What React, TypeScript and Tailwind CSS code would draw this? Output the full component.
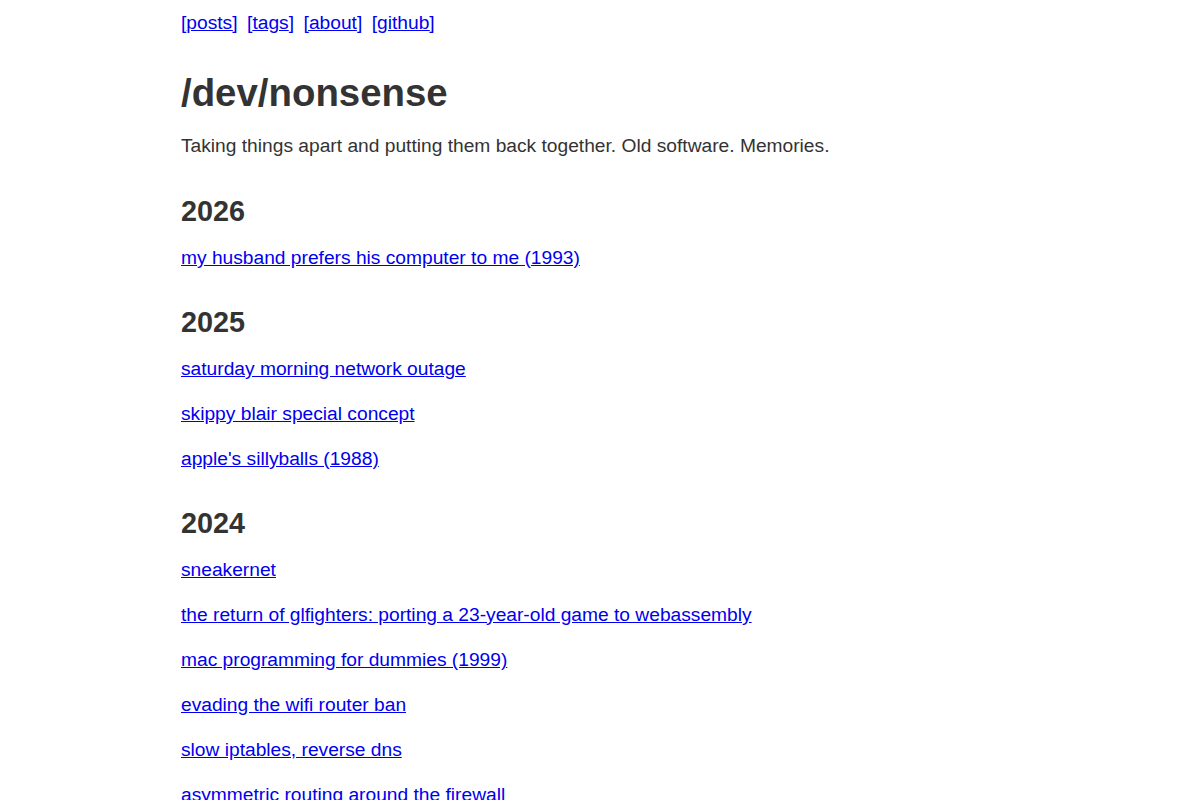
import React from "react";

type Section = { year: string; posts: string[] };

const sections: Section[] = [
  { year: "2026", posts: ["my husband prefers his computer to me (1993)"] },
  {
    year: "2025",
    posts: [
      "saturday morning network outage",
      "skippy blair special concept",
      "apple's sillyballs (1988)",
    ],
  },
  {
    year: "2024",
    posts: [
      "sneakernet",
      "the return of glfighters: porting a 23-year-old game to webassembly",
      "mac programming for dummies (1999)",
      "evading the wifi router ban",
      "slow iptables, reverse dns",
      "asymmetric routing around the firewall",
    ],
  },
];

const nav = ["posts", "tags", "about", "github"];

export default function App() {
  return (
    <div
      className="min-h-screen bg-white text-[#333333] text-[19.2px]"
      style={{ fontFamily: '"Liberation Sans", Arial, sans-serif' }}
    >
      <div className="mx-auto max-w-[838px] pt-2">
        <nav className="flex gap-[9.5px] leading-[30px]">
          {nav.map((n) => (
            <a key={n} href="#" className="text-[#0000ee] underline">
              [{n}]
            </a>
          ))}
        </nav>
        <h1 className="mt-[32px] text-[38.4px] font-bold leading-[46px]">/dev/nonsense</h1>
        <p className="mt-[15px] leading-[30px]">
          Taking things apart and putting them back together. Old software. Memories.
        </p>
        <div className="mt-[33px] flex flex-col gap-[32px]">
          {sections.map((s) => (
            <section key={s.year}>
              <h2 className="text-[28.8px] font-bold leading-[34px]">{s.year}</h2>
              <ul className="mt-[15px] flex flex-col gap-[15px]">
                {s.posts.map((p) => (
                  <li key={p} className="leading-[30px]">
                    <a href="#" className="text-[#0000ee] underline">
                      {p}
                    </a>
                  </li>
                ))}
              </ul>
            </section>
          ))}
        </div>
      </div>
    </div>
  );
}
